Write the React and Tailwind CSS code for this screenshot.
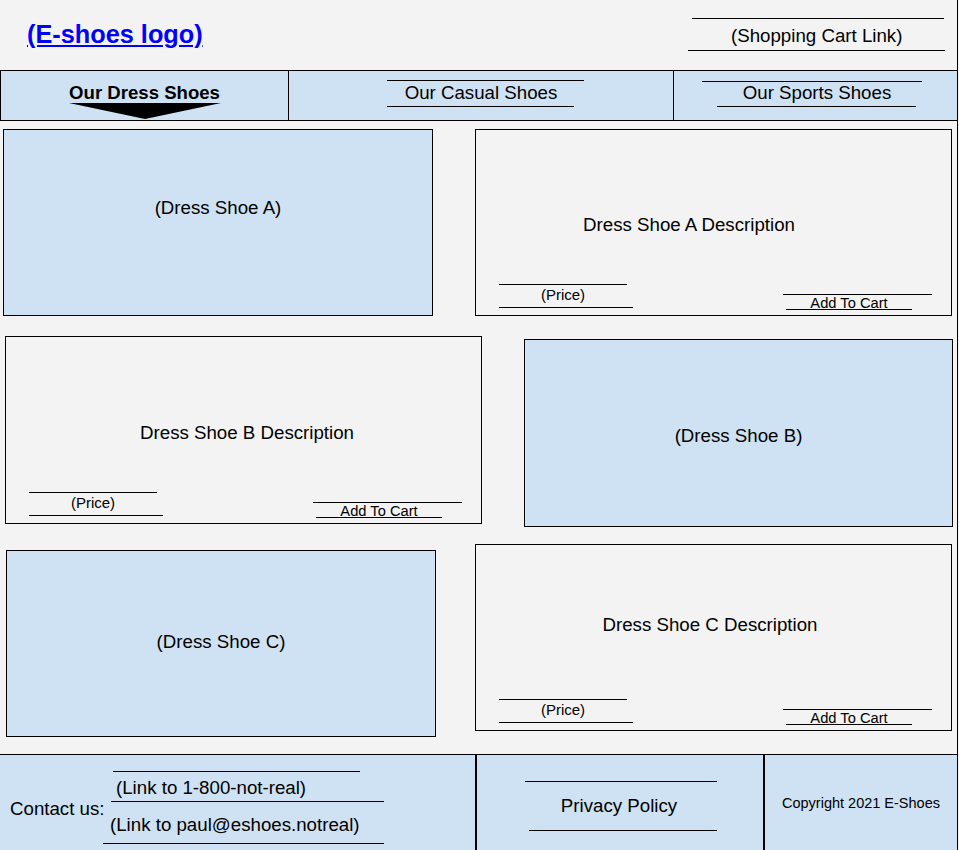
import React from "react";

const Line = ({ className = "" }) => <div className={`h-0 border-t border-black ${className}`} />;

function PriceCart() {
  return (
    <div className="mt-auto mb-[5px] flex items-end">
      <div className="ml-[23px] mb-[2px] w-[134px] flex flex-col">
        <Line className="w-[128px]" />
        <div className="mt-[2px] w-[128px] text-center text-[15px] leading-[16px]">(Price)</div>
        <Line className="mt-[4px] w-[134px]" />
      </div>
      <div className="ml-[150px] w-[149px] flex flex-col">
        <Line className="w-[149px]" />
        <div className="mt-[2px] ml-[3px] w-[126px] text-center text-[14.7px] leading-[12px] whitespace-nowrap">Add To Cart</div>
        <Line className="ml-[3px] w-[126px]" />
      </div>
    </div>
  );
}

function Desc({ title, mt, shift, className = "" }) {
  return (
    <div className={`w-[477px] h-[187px] border border-black bg-[#f3f3f3] flex flex-col ${className}`}>
      <div className={`h-[21px] text-[18.7px] leading-[21px] text-center whitespace-nowrap ${mt} ${shift}`}>{title}</div>
      <PriceCart />
    </div>
  );
}

function Img({ label, pt, className = "" }) {
  return (
    <div className={`h-[187px] border border-black bg-[#cfe2f3] text-center text-[18.7px] leading-[21px] ${pt} ${className}`}>
      {label}
    </div>
  );
}

export default function App() {
  return (
    <div className="w-[959px] h-[850px] bg-[#f3f3f3] text-black font-['Liberation_Sans',Arial,sans-serif] overflow-hidden">
      <div className="w-[958px] h-[850px] border-r border-black flex flex-col">
        {/* Header */}
        <div className="h-[70px] flex items-start justify-between">
          <a href="#" className="ml-[27px] mt-[20px] text-[25.3px] leading-[29px] font-bold text-[#0000ff] underline whitespace-nowrap">
            (E-shoes logo)
          </a>
          <div className="mr-[12px] mt-[18px] w-[257px] flex flex-col">
            <Line className="ml-[4px] w-[252px]" />
            <div className="mt-[6px] ml-[43px] text-[18.7px] leading-[21px] whitespace-nowrap">(Shopping Cart Link)</div>
            <Line className="mt-[4px] w-[257px]" />
          </div>
        </div>

        {/* Nav */}
        <div className="h-[51px] border-y border-l border-black bg-[#cfe2f3] flex">
          <div className="w-[288px] border-r border-black flex flex-col items-center pt-[11px]">
            <div className="text-[18.6px] leading-[21px] font-bold whitespace-nowrap">Our Dress Shoes</div>
            <svg width="152" height="16" viewBox="0 0 152 16">
              <polygon points="0,0 152,0 76,16" fill="#000" />
            </svg>
          </div>
          <div className="w-[385px] border-r border-black flex flex-col pt-[9px]">
            <Line className="ml-[98px] w-[197px]" />
            <div className="mt-[1px] text-center text-[18.7px] leading-[21px] whitespace-nowrap">Our Casual Shoes</div>
            <Line className="mt-[3px] ml-[98px] w-[187px]" />
          </div>
          <div className="flex-1 flex flex-col pt-[10px]">
            <Line className="ml-[28px] w-[220px]" />
            <div className="text-center text-[18.7px] leading-[21px] pl-[3px] whitespace-nowrap">Our Sports Shoes</div>
            <Line className="mt-[3px] ml-[43px] w-[199px]" />
          </div>
        </div>

        {/* Row 1 */}
        <div className="flex items-start pt-[8px]">
          <Img label="(Dress Shoe A)" pt="pt-[67px]" className="ml-[3px] w-[430px]" />
          <Desc title="Dress Shoe A Description" mt="mt-[84px]" shift="pr-[49px]" className="ml-[42px]" />
        </div>

        {/* Row 2 */}
        <div className="flex items-start">
          <Desc title="Dress Shoe B Description" mt="mt-[85px]" shift="pl-[7px]" className="ml-[5px] mt-[20px] h-[188px]" />
          <Img label="(Dress Shoe B)" pt="pt-[85px]" className="ml-[42px] mt-[23px] w-[429px] h-[188px]" />
        </div>

        {/* Row 3 */}
        <div className="flex items-start">
          <Img label="(Dress Shoe C)" pt="pt-[80px]" className="ml-[6px] mt-[23px] w-[430px]" />
          <Desc title="Dress Shoe C Description" mt="mt-[69px]" shift="pr-[7px]" className="ml-[39px] mt-[17px]" />
        </div>

        {/* Footer */}
        <div className="mt-auto h-[96px] border-t border-black bg-[#cfe2f3] flex">
          <div className="w-[477px] border-r-2 border-black flex items-start">
            <div className="ml-[10px] mt-[43px] w-[93px] text-[18.7px] leading-[21px] whitespace-nowrap">Contact us:</div>
            <div className="flex flex-col mt-[16px]">
              <Line className="ml-[10px] w-[247px]" />
              <div className="mt-[5px] ml-[13px] text-[18.7px] leading-[21px] whitespace-nowrap">(Link to 1-800-not-real)</div>
              <Line className="mt-[3px] ml-[8px] w-[273px]" />
              <div className="mt-[12px] ml-[7px] text-[18.7px] leading-[21px] whitespace-nowrap">(Link to paul@eshoes.notreal)</div>
              <Line className="mt-[8px] w-[281px]" />
            </div>
          </div>
          <div className="w-[288px] border-r-2 border-black flex flex-col pt-[26px]">
            <Line className="ml-[48px] w-[192px]" />
            <div className="mt-[13px] pr-[2px] text-center text-[18.7px] leading-[21px] whitespace-nowrap">Privacy Policy</div>
            <Line className="mt-[14px] ml-[52px] w-[188px]" />
          </div>
          <div className="flex-1 flex justify-center pt-[40px]">
            <div className="text-[14.5px] leading-[16px] whitespace-nowrap">Copyright 2021 E-Shoes</div>
          </div>
        </div>
      </div>
    </div>
  );
}
